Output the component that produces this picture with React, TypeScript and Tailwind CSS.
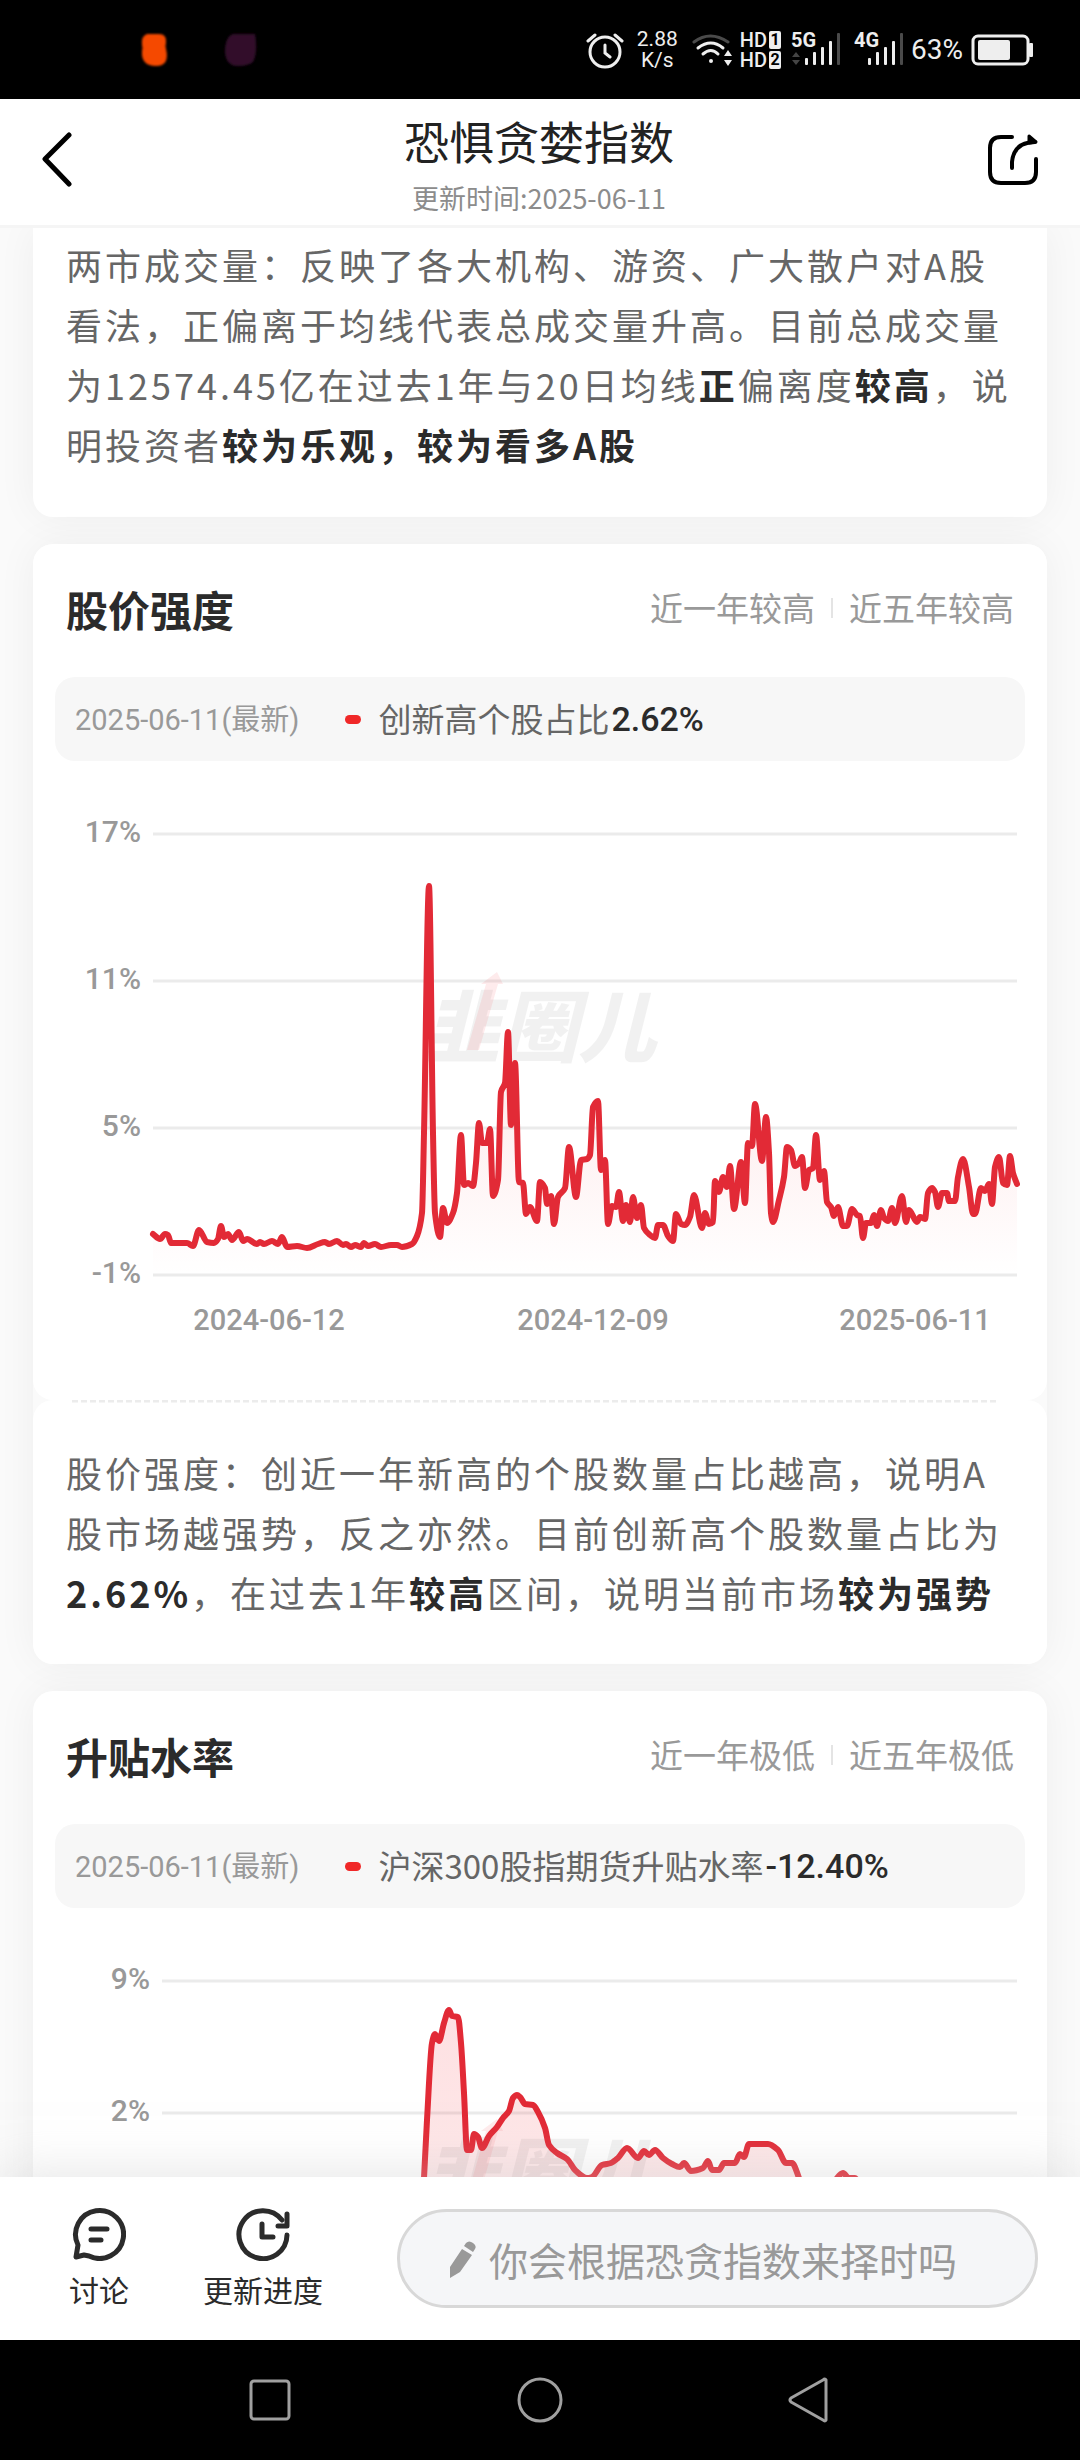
import React from "react";

type Point = [number, number];

const STRENGTH: Point[] = [
  [153,1234],[160,1239],[165,1234],[168,1235],[171,1243],[187,1243],[193,1246],[199,1230],[207,1242],[214,1243],
  [218,1239],[221,1226],[224,1237],[228,1234],[232,1240],[239,1232],[243,1241],[247,1239],[257,1244],[260,1242],
  [264,1244],[272,1241],[278,1244],[282,1237],[287,1247],[297,1246],[307,1248],[318,1244],[325,1242],[329,1244],
  [337,1241],[343,1245],[346,1244],[351,1247],[355,1245],[361,1247],[364,1243],[368,1246],[375,1244],[381,1247],
  [391,1245],[397,1245],[402,1247],[412,1244],[417,1236],[422,1213],[424,1133],[429,886],[433,1133],[435,1213],
  [440,1237],[443,1208],[447,1223],[453,1213],[457,1193],[461,1135],[464,1185],[468,1183],[473,1186],[476,1163],
  [479,1123],[482,1143],[487,1143],[490,1129],[493,1196],[498,1180],[501,1092],[505,1083],[508,1032],[511,1125],
  [515,1063],[519,1182],[523,1183],[526,1214],[530,1207],[537,1221],[540,1182],[545,1188],[547,1204],[551,1196],
  [554,1224],[558,1197],[565,1188],[569,1147],[576,1197],[581,1160],[587,1159],[590,1155],[593,1107],[598,1101],
  [601,1170],[605,1160],[608,1224],[612,1206],[616,1207],[619,1192],[623,1221],[626,1205],[630,1222],[633,1197],
  [637,1218],[641,1205],[644,1228],[650,1235],[655,1238],[658,1225],[663,1225],[668,1236],[673,1241],[676,1214],
  [681,1224],[685,1225],[690,1217],[694,1195],[702,1228],[705,1213],[709,1224],[713,1222],[715,1181],[719,1192],
  [723,1177],[727,1187],[730,1166],[734,1209],[741,1162],[745,1203],[748,1143],[752,1146],[755,1104],[762,1161],
  [766,1117],[769,1153],[771,1213],[773,1222],[779,1200],[784,1177],[787,1147],[791,1150],[795,1166],[799,1163],
  [802,1157],[805,1188],[809,1170],[813,1168],[816,1135],[820,1180],[824,1171],[827,1202],[831,1207],[834,1216],
  [838,1207],[843,1226],[847,1226],[852,1209],[857,1215],[860,1216],[863,1238],[866,1223],[871,1223],[874,1215],
  [877,1226],[881,1210],[884,1218],[888,1221],[892,1208],[895,1223],[902,1196],[906,1222],[909,1210],[917,1222],
  [920,1217],[925,1219],[928,1193],[932,1188],[935,1192],[938,1207],[942,1193],[947,1193],[949,1201],[955,1201],
  [958,1177],[963,1159],[969,1187],[973,1214],[975,1214],[981,1188],[985,1191],[989,1184],[992,1204],[995,1167],
  [999,1157],[1003,1183],[1007,1185],[1010,1156],[1013,1173],[1017,1184],
];

const BASIS: Point[] = [
  [421,2250],[424,2178],[427,2120],[432,2043],[435,2034],[439,2041],[444,2023],[449,2010],[452,2016],[458,2017],
  [461,2043],[464,2093],[467,2150],[471,2150],[474,2134],[478,2137],[482,2148],[489,2136],[497,2127],[503,2118],
  [509,2111],[513,2098],[517,2095],[520,2097],[525,2104],[533,2105],[538,2112],[545,2128],[549,2145],[557,2153],
  [567,2159],[576,2171],[587,2178],[592,2177],[602,2165],[611,2163],[618,2158],[627,2148],[638,2158],[644,2151],
  [649,2155],[655,2150],[663,2158],[672,2164],[680,2167],[684,2163],[691,2171],[703,2168],[708,2161],[712,2170],
  [719,2170],[724,2163],[735,2163],[740,2154],[744,2157],[749,2144],[768,2144],[778,2150],[786,2163],[792,2163],
  [799,2178],[806,2200],[830,2196],[837,2178],[843,2173],[849,2178],[855,2178],[864,2200],[1017,2230],
];

// Monotone cubic interpolation, so that the curve never overshoots its points.
function smooth(points: Point[]): string {
  const n = points.length;
  const slopes: number[] = [];
  for (let i = 0; i < n - 1; i++) {
    slopes.push((points[i + 1][1] - points[i][1]) / (points[i + 1][0] - points[i][0]));
  }
  const tangents = points.map((_, i) => {
    if (i === 0) return slopes[0];
    if (i === n - 1) return slopes[n - 2];
    const a = slopes[i - 1];
    const b = slopes[i];
    return a * b <= 0 ? 0 : (2 * a * b) / (a + b);
  });
  let d = `M${points[0][0]} ${points[0][1]}`;
  for (let i = 0; i < n - 1; i++) {
    const [x0, y0] = points[i];
    const [x1, y1] = points[i + 1];
    const h = (x1 - x0) / 3;
    d += `C${x0 + h} ${y0 + tangents[i] * h} ${x1 - h} ${y1 - tangents[i + 1] * h} ${x1} ${y1}`;
  }
  return d;
}

interface ChartProps {
  id: string;
  label: string;
  viewBox: string;
  points: Point[];
  left: number;
  labelRight: number;
  grid: { y: number; text: string }[];
  dates: { x: number; text: string }[];
  base: number;
  topOpacity: number;
  bottomOpacity: number;
  logoY: number;
}

function Chart(p: ChartProps) {
  const line = smooth(p.points);
  const first = p.points[0][0];
  const last = p.points[p.points.length - 1][0];
  return (
    <svg viewBox={p.viewBox} role="img" aria-label={p.label} className="block w-full font-['Roboto',sans-serif]">
      <defs>
        <linearGradient id={p.id} x1="0" y1="0" x2="0" y2="1">
          <stop offset="0" stopColor="#f5222d" stopOpacity={p.topOpacity} />
          <stop offset="1" stopColor="#f5222d" stopOpacity={p.bottomOpacity} />
        </linearGradient>
      </defs>
      {p.grid.map((g) => (
        <g key={g.text}>
          <line x1={p.left} x2="1017" y1={g.y} y2={g.y} stroke="#ebebeb" strokeWidth="3" />
          <text x={p.labelRight} y={g.y + 8} textAnchor="end" fontSize="30" fontWeight="500" fill="#999999">
            {g.text}
          </text>
        </g>
      ))}
      {p.dates.map((d) => (
        <text key={d.text} x={d.x} y="1330" textAnchor="middle" fontSize="29" fontWeight="500" fill="#999999">
          {d.text}
        </text>
      ))}
      <path d={`${line}L${last} ${p.base}L${first} ${p.base}Z`} fill={`url(#${p.id})`} />
      <g opacity="0.05" className="font-['Noto_Sans_CJK_SC',sans-serif]">
        <text x="422" y={p.logoY + 60} fontSize="78" fontWeight="900" fontStyle="italic" fill="#000000">
          韭圈儿
        </text>
      </g>
      <path
        d={`M467 ${p.logoY + 54}L486 ${p.logoY - 12}h-5l16-12 6 12h-5L479 ${p.logoY + 54}Z`}
        fill="#f5222d"
        opacity="0.09"
      />
      <path d={line} fill="none" stroke="#e22a36" strokeWidth="6" strokeLinejoin="round" strokeLinecap="round" />
    </svg>
  );
}

interface HeadProps {
  title: string;
  year1: string;
  year5: string;
  series: string;
  value: string;
}

function CardHead({ title, year1, year5, series, value }: HeadProps) {
  return (
    <>
      <div className="flex h-[60px] items-center justify-between px-[33px]">
        <h2 className="text-[42px] font-bold text-[#2b2b2b]">{title}</h2>
        <div className="flex items-center gap-4 text-[33px] text-[#999999]">
          <span>{year1}</span>
          <span className="h-5 w-[2px] bg-[#e4e4e4]" />
          <span>{year5}</span>
        </div>
      </div>
      <div className="mx-[22px] mt-[39px] flex h-[84px] items-center rounded-[20px] bg-[#f7f7f7] px-5 font-['Roboto','Noto_Sans_CJK_SC',sans-serif]">
        <span className="pt-1 text-[29px] text-[#999999]">2025-06-11(最新)</span>
        <span className="mr-[17px] ml-[46px] h-[9px] w-4 rounded-full bg-[#f02828]" />
        <span className="font-['Noto_Sans_CJK_SC',sans-serif] text-[33px] text-[#666666]">{series}</span>
        <span className="ml-[2px] text-[34px] font-medium text-[#2b2b2b]">{value}</span>
      </div>
    </>
  );
}

function Strong({ children }: { children: React.ReactNode }) {
  return <strong className="font-bold text-[#2b2b2b]">{children}</strong>;
}

function Signal({ name, dim }: { name: string; dim?: boolean }) {
  return (
    <svg width="50" height="48" viewBox="0 -4 50 48" fill="#eeeeee" aria-label={name}>
      <text x="0" y="17" fontSize="20" fontWeight="700">
        {name}
      </text>
      {dim && <path d="M1 27l4-5 4 5zM1 30l4 5 4-5z" fill="#444444" />}
      <rect x="14" y="28" width="3" height="7" rx="1" />
      <rect x="22" y="22" width="3" height="13" rx="1" />
      <rect x="30" y="17" width="3" height="18" rx="1" />
      <rect x="38" y="11" width="3" height="24" rx="1" />
      <rect x="46" y="3" width="3" height="32" rx="1" fill="#4a4a4a" />
    </svg>
  );
}

function Hd({ sim }: { sim: string }) {
  return (
    <span className="flex h-5 items-center gap-[2px]">
      <span>HD</span>
      <span className="flex h-[18px] w-3 items-center justify-center rounded-[2px] bg-[#eeeeee] text-[16px] font-bold text-black">
        {sim}
      </span>
    </span>
  );
}

function StatusBar() {
  return (
    <div className="flex h-[99px] shrink-0 items-center bg-black pr-[47px] font-['Roboto',sans-serif] text-[#eeeeee]">
      <svg width="130" height="44" viewBox="0 0 130 44" className="ml-[135px]" aria-hidden="true">
        <defs>
          <filter id="soft">
            <feGaussianBlur stdDeviation="1.2" />
          </filter>
        </defs>
        <path filter="url(#soft)" d="M12 6h12q8 0 7 9-1 3 0 6 4 17-10 17-15 0-14-15 1-3 0-6-1-9 5-11z" fill="#f54a05" />
        <path filter="url(#soft)" d="M98 6h22q3 18-2 28-5 4-15 4-12 0-13-14 0-15 8-18z" fill="#32112c" />
      </svg>
      <div className="flex-1" />
      <svg width="38" height="40" viewBox="0 0 38 40" fill="none" stroke="#eeeeee" strokeWidth="3" strokeLinecap="round" aria-hidden="true">
        <circle cx="19" cy="22" r="15" />
        <path d="M2 11l7-6M29 5l7 6M19 15v8l5 4" />
      </svg>
      <div className="ml-[13px] text-center text-[21px] leading-[21px]">
        2.88
        <br />
        K/s
      </div>
      <svg width="42" height="40" viewBox="0 0 42 40" fill="none" strokeWidth="3" strokeLinecap="round" className="ml-[14px]" aria-hidden="true">
        <path d="M2 12q16-12 34 0" stroke="#4a4a4a" />
        <path d="M6 18q13-10 25 0M11 24q8-7 15 0" stroke="#eeeeee" />
        <circle cx="19" cy="31" r="2" fill="#eeeeee" />
        <path d="M32 26l4-6 4 6zM32 30l4 6 4-6z" fill="#eeeeee" />
      </svg>
      <div className="ml-[6px] flex flex-col text-[20px] leading-5 font-medium">
        <Hd sim="1" />
        <Hd sim="2" />
      </div>
      <div className="ml-[10px] flex gap-[13px]">
        <Signal name="5G" dim />
        <Signal name="4G" />
      </div>
      <span className="ml-[7px] text-[28px]">63%</span>
      <svg width="62" height="34" viewBox="0 0 62 34" className="ml-2" aria-hidden="true">
        <rect x="2" y="3" width="55" height="28" rx="5" fill="none" stroke="#eeeeee" strokeWidth="3" />
        <rect x="7" y="7" width="32" height="20" rx="2" fill="#eeeeee" />
        <rect x="58" y="10" width="4" height="14" rx="1" fill="#eeeeee" />
      </svg>
    </div>
  );
}

export default function App() {
  return (
    <div className="flex h-screen flex-col overflow-hidden bg-[#fafafa] font-['Noto_Sans_CJK_SC',sans-serif]">
      <StatusBar />

      <header className="flex h-[129px] shrink-0 items-center justify-between border-b-[3px] border-[#f5f5f5] bg-white pr-[40px] pl-[38px]">
        <button type="button" aria-label="返回" className="w-[54px] pb-1">
          <svg width="36" height="56" viewBox="0 0 36 56" fill="none" stroke="#000000" strokeWidth="5" strokeLinecap="round" strokeLinejoin="round">
            <path d="M31 3L7 27l24 25" />
          </svg>
        </button>
        <div className="flex flex-col items-center gap-[3px] pt-1">
          <h1 className="text-[45px] leading-[64px] text-[#222222]">恐惧贪婪指数</h1>
          <p className="text-[27px] leading-[44px] text-[#8c8c8c]">更新时间:2025-06-11</p>
        </div>
        <button type="button" aria-label="分享" className="flex w-[54px] justify-end pb-1">
          <svg width="54" height="54" viewBox="0 0 54 54" fill="none" stroke="#000000" strokeWidth="4" strokeLinecap="round" strokeLinejoin="round">
            <path d="M26 4H15Q4 4 4 15v24q0 11 11 11h24q11 0 11-11V26" />
            <path d="M26 35V29Q28 9 49 9" />
            <path d="M43 3l7 6-7 1z" fill="#000000" strokeWidth="3" />
          </svg>
        </button>
      </header>

      <main className="min-h-0 flex-1 overflow-hidden px-[33px]">
        <section className="rounded-b-[20px] bg-white px-[33px] pt-[6px] pb-[43px] shadow-[0_0_40px_rgba(0,0,0,0.05)]">
          <p className="text-[36px] leading-[60px] tracking-[3px] text-[#666666]">
            两市成交量：反映了各大机构、游资、广大散户对A股看法，正偏离于均线代表总成交量升高。目前总成交量为12574.45亿在过去1年与20日均线
            <Strong>正</Strong>偏离度<Strong>较高</Strong>，说明投资者<Strong>较为乐观，较为看多A股</Strong>
          </p>
        </section>

        <section className="mt-[27px] rounded-[20px] shadow-[0_0_40px_rgba(0,0,0,0.05)]">
          <div className="rounded-[20px] bg-white pt-[34px]">
            <CardHead title="股价强度" year1="近一年较高" year5="近五年较高" series="创新高个股占比" value="2.62%" />
            <Chart
              id="strength-fill"
              label="创新高个股占比走势"
              viewBox="33 761 1014 639"
              points={STRENGTH}
              left={153}
              labelRight={141}
              grid={[
                { y: 834, text: "17%" },
                { y: 981, text: "11%" },
                { y: 1128, text: "5%" },
                { y: 1275, text: "-1%" },
              ]}
              dates={[
                { x: 269, text: "2024-06-12" },
                { x: 593, text: "2024-12-09" },
                { x: 915, text: "2025-06-11" },
              ]}
              base={1275}
              topOpacity={0.18}
              bottomOpacity={0}
              logoY={996}
            />
          </div>
          <div className="rounded-[20px] bg-white px-[33px] pb-[42px]">
            <svg className="block h-[3px] w-full pr-[18px] pl-[6px]" aria-hidden="true">
              <line x1="0" x2="100%" y1="1" y2="1" stroke="#ececec" strokeWidth="3" strokeDasharray="6 3" />
            </svg>
            <p className="pt-[39px] text-[36px] leading-[60px] tracking-[3px] text-[#666666]">
              股价强度：创近一年新高的个股数量占比越高，说明A股市场越强势，反之亦然。目前创新高个股数量占比为<Strong>2.62%</Strong>，在过去1年
              <Strong>较高</Strong>区间，说明当前市场<Strong>较为强势</Strong>
            </p>
          </div>
        </section>

        <section className="mt-[27px] rounded-[20px] bg-white pt-[34px] shadow-[0_0_40px_rgba(0,0,0,0.05)]">
          <CardHead title="升贴水率" year1="近一年极低" year5="近五年极低" series="沪深300股指期货升贴水率" value="-12.40%" />
          <Chart
            id="basis-fill"
            label="沪深300股指期货升贴水率走势"
            viewBox="33 1908 1014 400"
            points={BASIS}
            left={162}
            labelRight={150}
            grid={[
              { y: 1981, text: "9%" },
              { y: 2113, text: "2%" },
            ]}
            dates={[]}
            base={2300}
            topOpacity={0.14}
            bottomOpacity={0.08}
            logoY={2143}
          />
        </section>
      </main>

      <footer className="relative flex h-[163px] shrink-0 items-center gap-[74px] bg-white pr-[42px] pl-[69px] shadow-[0_0_50px_rgba(200,200,200,0.5)]">
        <button type="button" className="flex shrink-0 flex-col items-center gap-[6px] text-[30px] leading-[44px] text-[#2b2b2b]">
          <svg width="54" height="54" viewBox="0 0 54 54" fill="none" stroke="#2b2b2b" strokeWidth="5" strokeLinecap="round" strokeLinejoin="round">
            <path d="M4 50l2-12A24 24 0 1 1 17 49l-5-1z" />
            <path d="M19 22h16M19 33h10" />
          </svg>
          讨论
        </button>
        <button type="button" className="flex shrink-0 flex-col items-center gap-[6px] text-[30px] leading-[44px] text-[#2b2b2b]">
          <svg width="54" height="54" viewBox="0 0 54 54" fill="none" stroke="#2b2b2b" strokeWidth="5" strokeLinecap="round" strokeLinejoin="round">
            <path d="M51 28A24 24 0 1 1 46 13" />
            <path d="M51 7v12H42M26 17v13h11" />
          </svg>
          更新进度
        </button>
        <label className="flex h-[99px] min-w-0 flex-1 items-center rounded-full border-[3px] border-[#d8d8d8] bg-[#f5f6f8] pr-8 pl-[48px]">
          <svg width="30" height="38" viewBox="0 0 30 38" fill="#999999" className="shrink-0" aria-hidden="true">
            <path d="M14 9l10 6L12 32 2 38V27zM16 6l2-3q3-3 7 0 4 3 2 6l-2 3z" />
          </svg>
          <input
            type="text"
            aria-label="发表评论"
            placeholder="你会根据恐贪指数来择时吗"
            className="ml-[11px] w-full min-w-0 bg-transparent text-[39px] leading-[60px] text-[#2b2b2b] outline-none placeholder:text-[#999999]"
          />
        </label>
      </footer>

      <nav className="relative flex h-[120px] shrink-0 items-center bg-black px-[135px]">
        <button type="button" aria-label="最近任务" className="flex flex-1 justify-center">
          <svg width="46" height="46" viewBox="0 0 46 46" fill="none" stroke="#a0a0a0" strokeWidth="3">
            <rect x="4" y="4" width="38" height="38" rx="3" />
          </svg>
        </button>
        <button type="button" aria-label="主屏幕" className="flex flex-1 justify-center">
          <svg width="46" height="46" viewBox="0 0 46 46" fill="none" stroke="#a0a0a0" strokeWidth="3">
            <circle cx="23" cy="23" r="21" />
          </svg>
        </button>
        <button type="button" aria-label="返回上一页" className="flex flex-1 justify-center">
          <svg width="46" height="46" viewBox="0 0 46 46" fill="none" stroke="#a0a0a0" strokeWidth="3" strokeLinejoin="round">
            <path d="M39 3v40q-1 2-3 0L4 25q-2-2 0-4L36 3q2-2 3 0z" />
          </svg>
        </button>
      </nav>
    </div>
  );
}
